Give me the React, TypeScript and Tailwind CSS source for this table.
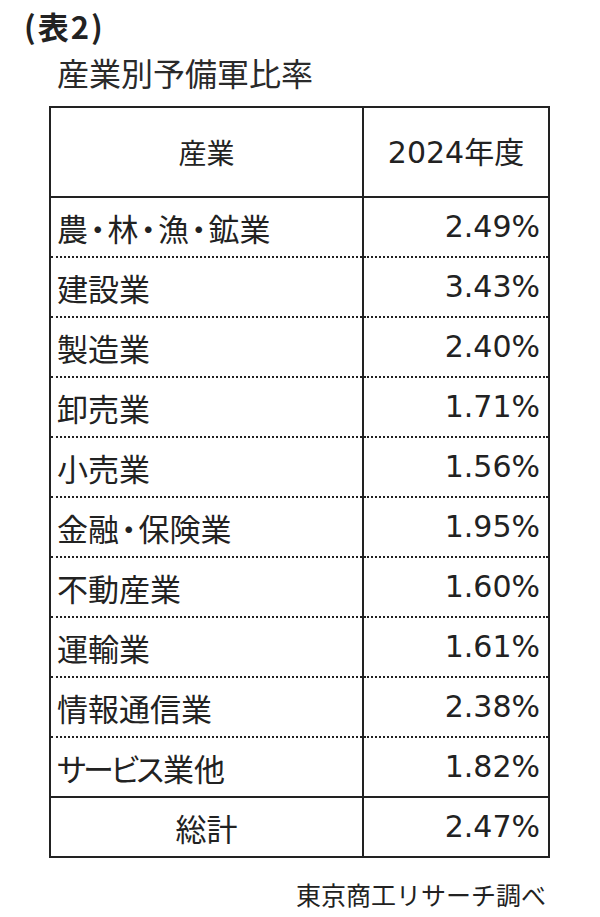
import React from "react";

const rows: [string, string][] = [
  ["農・林・漁・鉱業", "2.49%"],
  ["建設業", "3.43%"],
  ["製造業", "2.40%"],
  ["卸売業", "1.71%"],
  ["小売業", "1.56%"],
  ["金融・保険業", "1.95%"],
  ["不動産業", "1.60%"],
  ["運輸業", "1.61%"],
  ["情報通信業", "2.38%"],
  ["サービス業他", "1.82%"],
];

const font = { fontFamily: '"Noto Sans CJK JP", "Noto Sans", sans-serif' };
const numFont = { fontFamily: '"DejaVu Sans", "Noto Sans CJK JP", sans-serif' };

function Label({ text }: { text: string }) {
  if (text.startsWith("サービス")) {
    return (
      <>
        <span className="tracking-[-3px]">サービス</span>
        <span className="ml-[2px]">{text.slice(4)}</span>
      </>
    );
  }
  const parts = text.split("・");
  return (
    <>
      {parts.map((p, i) => (
        <React.Fragment key={i}>
          {i > 0 && <span className="px-[2px]">・</span>}
          {p}
        </React.Fragment>
      ))}
    </>
  );
}

export default function App() {
  return (
    <div className="w-[600px] h-[917px] bg-white text-[#222] overflow-hidden" style={font}>
      <div className="pl-[24px] pt-[6px] text-[31px] font-bold leading-[40px] tracking-[2px]">(表2)</div>
      <div className="pl-[57px] pt-[6px] text-[32px] leading-[40px] text-[#2a2a2a]">産業別予備軍比率</div>
      <table className="ml-[49px] mt-[14px] w-[501px] border-collapse border-2 border-[#222]">
        <tbody>
          <tr className="h-[90px] border-b-2 border-[#222]">
            <td className="w-[313px] border-x-2 border-[#222] text-center text-[28px]">産業</td>
            <td className="border-x-2 border-[#222] text-center text-[30px]" style={numFont}>2024年度</td>
          </tr>
          {rows.map(([name, val], i) => (
            <tr
              key={name}
              className={
                i === rows.length - 1
                  ? "h-[60px] border-b-2 border-[#222]"
                  : "h-[60px] border-b-2 border-dotted border-[#222]"
              }
            >
              <td className="border-x-2 border-[#222] pl-[6px] text-[31px] leading-none [font-feature-settings:'palt']">
                <Label text={name} />
              </td>
              <td className="border-x-2 border-[#222] pr-[8px] text-right text-[30px] leading-none" style={numFont}>{val}</td>
            </tr>
          ))}
          <tr className="h-[60px] border-b-2 border-[#222]">
            <td className="border-x-2 border-[#222] text-center text-[31px] leading-none">総計</td>
            <td className="border-x-2 border-[#222] pr-[8px] text-right text-[30px] leading-none" style={numFont}>2.47%</td>
          </tr>
        </tbody>
      </table>
      <div className="w-[546px] text-right pt-[21px] text-[25px] leading-[30px]">東京商工リサーチ調べ</div>
    </div>
  );
}
